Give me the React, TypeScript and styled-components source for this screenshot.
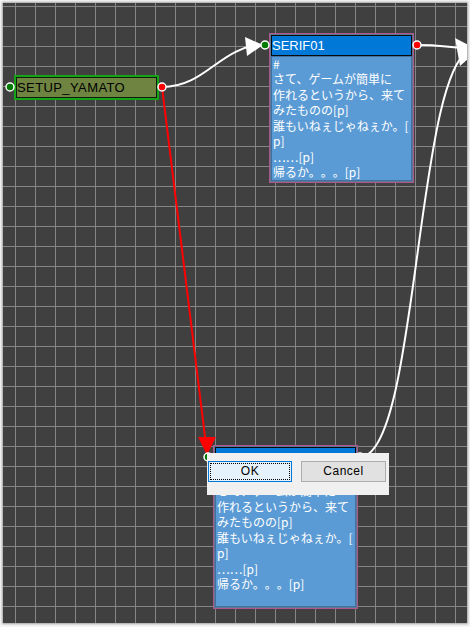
import React from "react";
import styled, { createGlobalStyle } from "styled-components";

const Global = createGlobalStyle`
  html, body { margin: 0; padding: 0; background: #f4f4f4; }
  body { width: 470px; height: 627px; overflow: hidden; }
`;

const Canvas = styled.div`
  position: relative;
  margin: 3px 0 0 3px;
  width: 464px;
  height: 620px;
  overflow: hidden;
  background-color: #404040;
  background-image: linear-gradient(to right, #858585 1px, transparent 1px),
    linear-gradient(to bottom, #858585 1px, transparent 1px);
  background-size: 20px 20px;
  background-position: 12px 3px;
  box-shadow: 0 0 2px 1px rgba(0, 0, 0, 0.35);
`;

const Wires = styled.svg`
  position: absolute;
  left: 0;
  top: 0;
  width: 464px;
  height: 620px;
  pointer-events: none;
`;

const StartNode = styled.div<{ $x: number; $y: number }>`
  position: absolute;
  left: ${(p) => p.$x - 3}px;
  top: ${(p) => p.$y - 3}px;
  width: 145px;
  height: 25px;
  box-sizing: border-box;
  border: 2px solid #17a317;
  display: flex;
`;

const StartInner = styled.div`
  flex: 1;
  border: 1px solid #0e1f0e;
  background: #6f8440;
  color: #000;
  font: 13px/19px "Liberation Sans", Arial, sans-serif;
  letter-spacing: 0.4px;
  padding-left: 0;
  white-space: nowrap;
`;

const SerifNode = styled.div<{ $x: number; $y: number; $h: number }>`
  position: absolute;
  left: ${(p) => p.$x - 3}px;
  top: ${(p) => p.$y - 3}px;
  width: 145px;
  height: ${(p) => p.$h}px;
  box-sizing: border-box;
  border: 1px solid #b0568f;
  padding: 1px;
  display: flex;
  flex-direction: column;
  background: #5b7894;
`;

const TitleBar = styled.div`
  height: 21px;
  box-sizing: border-box;
  background: #0078d7;
  border: 1px solid #0a0a0a;
  color: #fff;
  font: 13px/19px "Liberation Sans", Arial, sans-serif;
  padding-left: 0;
  white-space: nowrap;
  overflow: hidden;
`;

const Body = styled.div`
  flex: 1;
  box-sizing: border-box;
  background: #5b9bd5;
  border: 1px solid #41719c;
  color: #fff;
  font: 12px/15.45px "Noto Sans CJK JP", "Liberation Sans", sans-serif;
  text-spacing-trim: space-all;
  padding: 0 0 0 1px;
`;

const Lines = styled.div`
  margin-top: -1px;
`;

const Line = styled.div`
  white-space: nowrap;
`;

const Wide = styled.span`
  font-feature-settings: "fwid";
`;

const Dialog = styled.div<{ $x: number; $y: number }>`
  position: absolute;
  left: ${(p) => p.$x - 3}px;
  top: ${(p) => p.$y - 3}px;
  width: 182px;
  height: 42px;
  box-sizing: border-box;
  background: #f0f0f0;
  display: flex;
  align-items: flex-start;
  gap: 9px;
  padding: 8px 0 0 1px;
`;

const Button = styled.button<{ $primary?: boolean }>`
  position: relative;
  width: ${(p) => (p.$primary ? 84 : 85)}px;
  height: 21px;
  box-sizing: border-box;
  margin: 0;
  padding: 0;
  background: ${(p) => (p.$primary ? "#e5f1fb" : "#e1e1e1")};
  border: 1px solid ${(p) => (p.$primary ? "#0078d7" : "#adadad")};
  color: #000;
  font: 12px/19px "Liberation Sans", Arial, sans-serif;
  letter-spacing: 0.5px;
  outline: ${(p) => (p.$primary ? "1px dotted #000" : "none")};
  outline-offset: -3px;
`;

function Serif({ x, y, h, title }: { x: number; y: number; h: number; title: string }) {
  return (
    <SerifNode $x={x} $y={y} $h={h}>
      <TitleBar>{title}</TitleBar>
      <Body>
        <Lines>
          <Line>#</Line>
          <Line>さて、ゲームが簡単に</Line>
          <Line>作れるというから、来て</Line>
          <Line>みたものの[p]</Line>
          <Line>誰もいねぇじゃねぇか。[</Line>
          <Line>p]</Line>
          <Line>
            <Wide>……</Wide>[p]
          </Line>
          <Line>帰るか。。。[p]</Line>
        </Lines>
      </Body>
    </SerifNode>
  );
}

function Port({ x, y, color }: { x: number; y: number; color: string }) {
  return <circle cx={x} cy={y} r={4} fill={color} stroke="#fff" strokeWidth={1.5} />;
}

export default function App() {
  return (
    <>
      <Global />
      <Canvas>
        <StartNode $x={14} $y={75}>
          <StartInner>SETUP_YAMATO</StartInner>
        </StartNode>
        <Serif x={269} y={33} h={150} title="SERIF01" />
        <Serif x={213} y={445} h={164} title="SERIF04" />
        <Wires viewBox="3 3 464 620">
          <path d="M162 87 C 207 87, 220 45, 265 45" stroke="#fff" strokeWidth={2} fill="none" />
          <path d="M417 45 C 446 45, 446 48, 476 48" stroke="#fff" strokeWidth={2} fill="none" />
          <path d="M360 457 C 420 457, 415 48, 476 48" stroke="#fff" strokeWidth={2} fill="none" />
          <line x1={162} y1={87} x2={206} y2={445} stroke="#ff0000" strokeWidth={2} />
          <polygon points="245,37 263,45 247,56" fill="#fff" />
          <polygon points="455,38 478,50 460,66" fill="#fff" />
          <polygon points="198,437 216,437 207,455" fill="#ff0000" />
          <Port x={10} y={87} color="#007a00" />
          <Port x={162} y={87} color="#ff0000" />
          <Port x={265} y={45} color="#007a00" />
          <Port x={417} y={45} color="#ff0000" />
          <Port x={208} y={457} color="#007a00" />
          <Port x={360} y={457} color="#ff0000" />
        </Wires>
        <Dialog $x={207} $y={453}>
          <Button $primary>OK</Button>
          <Button>Cancel</Button>
        </Dialog>
      </Canvas>
    </>
  );
}
